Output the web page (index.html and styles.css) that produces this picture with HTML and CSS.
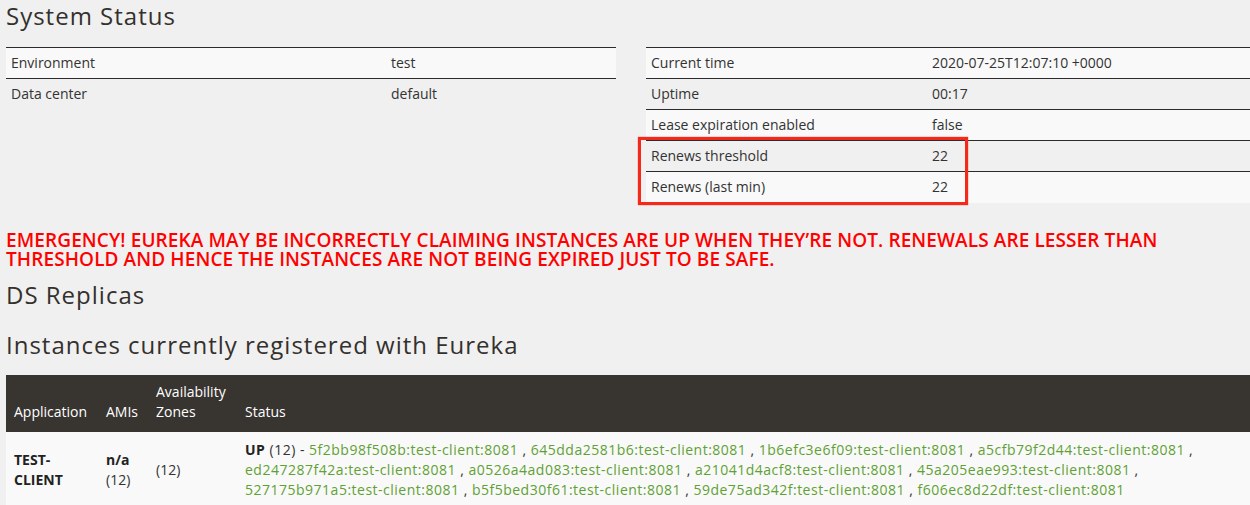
FILE: index.html
```html
<!DOCTYPE html>
<html>
<head>
<meta charset="utf-8">
<link rel="stylesheet" href="styles.css">
</head>
<body>
<h2 class="title">System Status</h2>
<div class="status-grid">
  <table class="kv kv-left">
    <tbody>
      <tr><td class="k">Environment</td><td>test</td></tr>
      <tr><td class="k">Data center</td><td>default</td></tr>
    </tbody>
  </table>
  <div class="right-wrap">
    <table class="kv kv-right">
      <tbody>
        <tr><td class="k">Current time</td><td>2020-07-25T12:07:10 +0000</td></tr>
        <tr><td class="k">Uptime</td><td>00:17</td></tr>
        <tr><td class="k">Lease expiration enabled</td><td>false</td></tr>
        <tr><td class="k">Renews threshold</td><td>22</td></tr>
        <tr><td class="k">Renews (last min)</td><td>22</td></tr>
      </tbody>
    </table>
    <div class="annot"></div>
  </div>
</div>
<h4 class="emergency">EMERGENCY! EUREKA MAY BE INCORRECTLY CLAIMING INSTANCES ARE UP WHEN THEY’RE NOT. RENEWALS ARE LESSER THAN THRESHOLD AND HENCE THE INSTANCES ARE NOT BEING EXPIRED JUST TO BE SAFE.</h4>
<h2 class="title sub">DS Replicas</h2>
<h2 class="title sub2">Instances currently registered with Eureka</h2>
<table class="apps">
  <thead>
    <tr>
      <th class="c-app">Application</th>
      <th class="c-ami">AMIs</th>
      <th class="c-zone">Availability Zones</th>
      <th>Status</th>
    </tr>
  </thead>
  <tbody>
    <tr>
      <td class="c-app"><b>TEST-CLIENT</b></td>
      <td class="c-ami"><b>n/a</b> (12)</td>
      <td class="c-zone">(12)</td>
      <td class="c-status"><b>UP</b> (12) - <a>5f2bb98f508b:test-client:8081</a> , <a>645dda2581b6:test-client:8081</a> , <a>1b6efc3e6f09:test-client:8081</a> , <a>a5cfb79f2d44:test-client:8081</a> , <a>ed247287f42a:test-client:8081</a> , <a>a0526a4ad083:test-client:8081</a> , <a>a21041d4acf8:test-client:8081</a> , <a>45a205eae993:test-client:8081</a> , <a>527175b971a5:test-client:8081</a> , <a>b5f5bed30f61:test-client:8081</a> , <a>59de75ad342f:test-client:8081</a> , <a>f606ec8d22df:test-client:8081</a></td>
    </tr>
  </tbody>
</table>
</body>
</html>
```
FILE: styles.css
```css
html, body {
  margin: 0;
  padding: 0;
}
body {
  background: #f0f0f0;
  color: #333;
  font-family: "Open Sans", "DejaVu Sans", sans-serif;
  font-size: 14px;
  padding: 0 0 0 6px;
  width: 1250px;
  height: 505px;
  overflow: hidden;
  box-sizing: border-box;
}
.title {
  font-family: "Open Sans", sans-serif;
  font-weight: 400;
  font-size: 24px;
  line-height: 30px;
  margin: 1px 0 16px 0;
  color: #34302d;
  letter-spacing: 1px;
}
.status-grid {
  display: grid;
  grid-template-columns: 610px 610px;
  column-gap: 30px;
  align-items: start;
}
.kv {
  border-collapse: collapse;
  width: 100%;
}
.kv td {
  border-top: 1px solid #2b2b2b;
  height: 31px;
  padding: 0 5px 2px 5px;
  box-sizing: border-box;
  vertical-align: middle;
  white-space: nowrap;
}
.kv tr:nth-child(odd) td {
  background: #f9f9f9;
}
.kv-left .k { width: 380px; }
.kv-right .k { width: 281px; }
.right-wrap {
  position: relative;
}
.annot {
  position: absolute;
  left: -8px;
  top: 90px;
  width: 330px;
  height: 68px;
  border: 3px solid #f5281c;
  box-sizing: border-box;
  box-shadow: 0 0 1px #f5281c;
}
.emergency {
  color: #ff0000;
  font-size: 19px;
  line-height: 19px;
  font-weight: 600;
  margin: 28px 0 0 0;
  letter-spacing: 0.1px;
}
.sub {
  margin: 11px 0 0 0;
}
.sub2 {
  margin: 20px 0 15px 0;
}
.apps {
  border-collapse: collapse;
  width: 1244px;
}
.apps th {
  background: #38342f;
  color: #fff;
  font-weight: 400;
  text-align: left;
  vertical-align: bottom;
  padding: 7px 8px 10px 8px;
  line-height: 20px;
}
.apps td {
  background: #f9f9f9;
  vertical-align: middle;
  padding: 8px 8px;
  line-height: 20px;
}
.c-app { width: 76px; }
.c-ami { width: 34px; }
.c-zone { width: 73px; }
.c-status { letter-spacing: 0.5px; }
.apps b { font-weight: 700; color: #222; }
.apps a {
  color: #5fa134;
  text-decoration: none;
  white-space: nowrap;
}
```
